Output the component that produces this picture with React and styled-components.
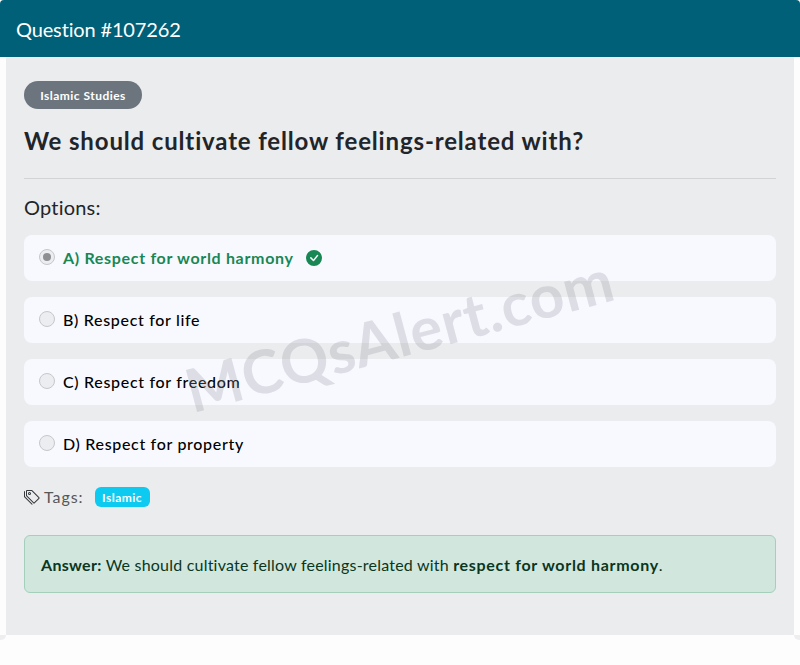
import React from 'react';
import styled, { createGlobalStyle } from 'styled-components';
import { BsTags, BsCheckCircleFill } from 'react-icons/bs';

const GlobalStyle = createGlobalStyle`
  html, body {
    margin: 0;
    padding: 0;
    background: #fdfdfd;
    font-family: "Lato", "Noto Sans", sans-serif;
  }
`;

const Page = styled.div`
  position: relative;
  width: 800px;
  height: 665px;
  overflow: hidden;
  background: #fdfdfd;
`;

const Header = styled.header`
  height: 57px;
  box-sizing: border-box;
  padding: 0 16px;
  display: flex;
  align-items: center;
  background: #006078;
  border-radius: 4px 4px 0 0;
  color: #fff;
  font-size: 20px;
  letter-spacing: -0.15px;
`;

const Body = styled.main`
  position: relative;
  height: 578px;
  box-sizing: border-box;
  margin: 0 6px;
  padding: 24px 18px 0;
  background: #ebecee;
`;

const Category = styled.span`
  display: inline-flex;
  align-items: center;
  justify-content: center;
  width: 118px;
  height: 28px;
  border-radius: 14px;
  background: #6c757d;
  color: #fff;
  font-size: 12px;
  font-weight: 700;
  letter-spacing: 0.47px;
`;

const Title = styled.h1`
  margin: 14px 0 0;
  height: 39px;
  line-height: 35px;
  font-size: 24px;
  font-weight: 700;
  letter-spacing: 0.85px;
  color: #212529;
`;

const Divider = styled.hr`
  margin: 16px 0 0;
  border: 0;
  border-top: 1px solid #d2d3d5;
`;

const OptionsLabel = styled.h2`
  margin: 16px 0 0;
  height: 24px;
  line-height: 24px;
  font-size: 20px;
  font-weight: 400;
  letter-spacing: 0.2px;
  color: #212529;
`;

const OptionList = styled.div`
  margin-top: 16px;
  display: flex;
  flex-direction: column;
  gap: 16px;
`;

const Option = styled.label`
  height: 46px;
  box-sizing: border-box;
  padding: 0 15px;
  display: flex;
  align-items: center;
  gap: 8px;
  border-radius: 8px;
  background: #f8f9ff;
  color: ${(p) => (p.$correct ? '#198754' : '#000')};
  font-size: 16px;
  font-weight: ${(p) => (p.$correct ? 700 : 500)};
  letter-spacing: 0.68px;
`;

const OptionText = styled.span`
  margin-bottom: 2px;
`;

const Radio = styled.span`
  flex: none;
  width: 16px;
  height: 16px;
  margin-top: -3px;
  box-sizing: border-box;
  display: flex;
  align-items: center;
  justify-content: center;
  border-radius: 50%;
  border: 1px solid #c6c7c9;
  background: #ecedf0;

  &::after {
    content: '';
    display: ${(p) => (p.$checked ? 'block' : 'none')};
    width: 8px;
    height: 8px;
    border-radius: 50%;
    background: #8e8f93;
  }
`;

const CorrectIcon = styled(BsCheckCircleFill)`
  margin-left: 4px;
  width: 16px;
  height: 16px;
  color: #198754;
`;

const Tags = styled.div`
  margin-top: 20px;
  height: 20px;
  display: flex;
  align-items: center;
  color: #55585b;
  font-size: 16px;
  letter-spacing: 0.95px;
`;

const TagsLabel = styled.span`
  margin-bottom: 2px;
`;

const TagIcon = styled(BsTags)`
  width: 16px;
  height: 16px;
  margin-right: 4px;
  color: #35383b;
`;

const TagBadge = styled.span`
  margin-left: 11px;
  width: 55px;
  height: 20px;
  display: flex;
  align-items: center;
  justify-content: center;
  border-radius: 6px;
  background: #0dcaf0;
  color: #fff;
  font-size: 12px;
  font-weight: 700;
  letter-spacing: 0.5px;
`;

const Answer = styled.div`
  margin-top: 28px;
  height: 58px;
  box-sizing: border-box;
  padding: 0 16px;
  display: flex;
  align-items: center;
  border: 1px solid #a3cfbb;
  border-radius: 6px;
  background: #d1e7dd;
  color: #0a3622;
  font-size: 16px;
  letter-spacing: 0.21px;
  white-space: pre;
`;

const Strong = styled.b`
  font-weight: 700;
  letter-spacing: ${(p) => (p.$wide ? '0.7px' : '0.3px')};
`;

const Watermark = styled.div`
  position: absolute;
  left: 179px;
  top: 304px;
  transform: rotate(-15deg);
  color: rgba(150, 152, 160, 0.28);
  font-size: 60px;
  font-weight: 700;
  line-height: 1;
  letter-spacing: 0.8px;
  white-space: nowrap;
  pointer-events: none;
`;

const Corner = styled.span`
  position: absolute;
  top: 635px;
  ${(p) => p.$side}: 0;
  width: 6px;
  height: 5px;
  background: #eeeef0;
  border-bottom-${(p) => (p.$side === 'left' ? 'right' : 'left')}-radius: 5px;
`;

const options = [
  { id: 'a', text: 'A) Respect for world harmony', correct: true },
  { id: 'b', text: 'B) Respect for life' },
  { id: 'c', text: 'C) Respect for freedom' },
  { id: 'd', text: 'D) Respect for property' },
];

function App() {
  return (
    <Page>
      <GlobalStyle />
      <Header>Question #107262</Header>
      <Body>
        <Category>Islamic Studies</Category>
        <Title>We should cultivate fellow feelings-related with?</Title>
        <Divider />
        <OptionsLabel>Options:</OptionsLabel>
        <OptionList>
          {options.map((o) => (
            <Option key={o.id} $correct={o.correct}>
              <Radio $checked={o.correct} />
              <OptionText>{o.text}</OptionText>
              {o.correct && <CorrectIcon />}
            </Option>
          ))}
        </OptionList>
        <Tags>
          <TagIcon />
          <TagsLabel>Tags:</TagsLabel>
          <TagBadge>Islamic</TagBadge>
        </Tags>
        <Answer>
          <Strong>Answer:</Strong> We should cultivate fellow feelings-related with <Strong $wide>respect for world harmony</Strong>.
        </Answer>
      </Body>
      <Corner $side="left" />
      <Corner $side="right" />
      <Watermark>MCQsAlert.com</Watermark>
    </Page>
  );
}

export default App;
